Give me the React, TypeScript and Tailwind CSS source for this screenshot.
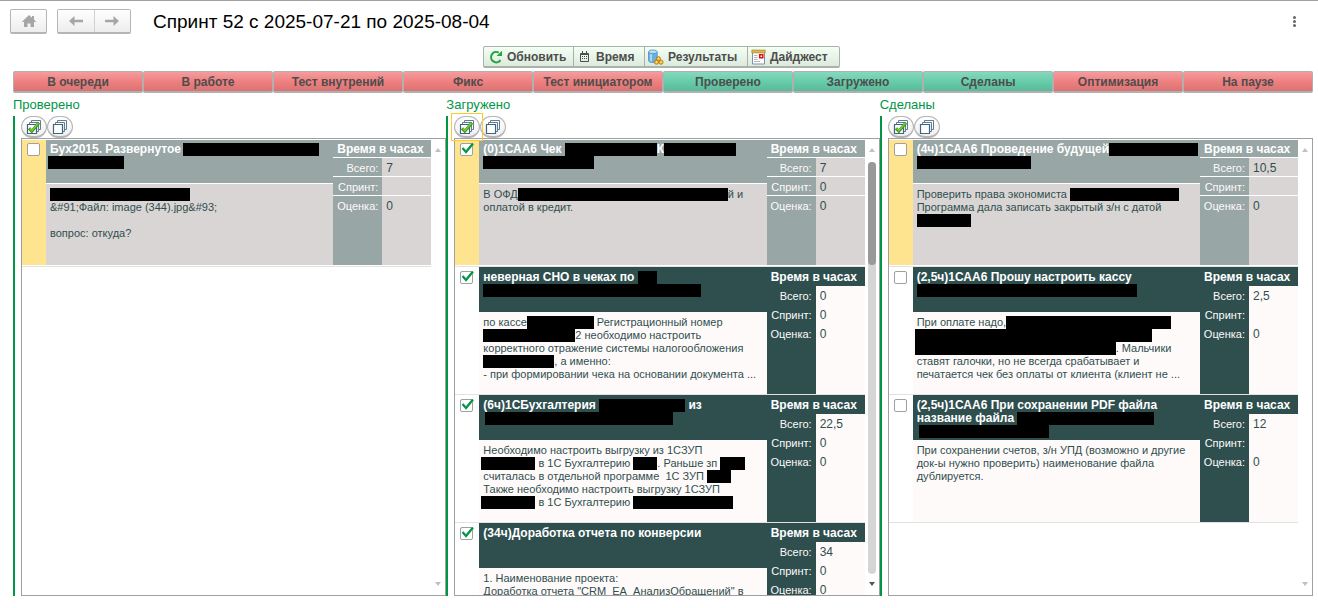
import React from "react";

type Tone = "selected" | "normal";

interface Task {
  id: string;
  tone: Tone;
  checked: boolean;
  label: string;
  title: React.ReactNode;
  body: React.ReactNode;
  total: string;
  sprint: string;
  estimate: string;
}

interface Column {
  name: string;
  focused?: boolean;
  scrollable?: boolean;
  tasks: Task[];
}

function Line({ children }: { children?: React.ReactNode }) {
  return <div className="h-[13px] whitespace-pre">{children}</div>;
}

function Bar({ size }: { size: string }) {
  return <span aria-hidden="true" className={`inline-block h-[13px] bg-black align-top ${size}`} />;
}

const columns: Column[] = [
  {
    name: "Проверено",
    tasks: [
      {
        id: "p1",
        tone: "selected",
        checked: false,
        label: "Бух2015. Развернутое",
        title: (
          <>
            <Line>Бух2015. Развернутое<Bar size="ml-0.5 w-[136px]" /></Line>
            <Line><Bar size="-ml-0.5 w-[76px]" /></Line>
          </>
        ),
        body: (
          <>
            <Line><Bar size="w-[140px]" /></Line>
            <Line>&amp;#91;Файл: image (344).jpg&amp;#93;</Line>
            <Line />
            <Line>вопрос: откуда?</Line>
          </>
        ),
        total: "7",
        sprint: "",
        estimate: "0",
      },
    ],
  },
  {
    name: "Загружено",
    focused: true,
    scrollable: true,
    tasks: [
      {
        id: "z1",
        tone: "selected",
        checked: true,
        label: "(0)1САА6 Чек",
        title: (
          <>
            <Line>(0)1САА6 Чек <Bar size="w-[92px]" />К<Bar size="w-[72px]" /></Line>
            <Line><Bar size="w-[111px]" /></Line>
          </>
        ),
        body: (
          <>
            <Line>В ОФД<Bar size="w-[210px]" />й и</Line>
            <Line>оплатой в кредит.</Line>
          </>
        ),
        total: "7",
        sprint: "0",
        estimate: "0",
      },
      {
        id: "z2",
        tone: "normal",
        checked: true,
        label: "неверная СНО в чеках по",
        title: (
          <>
            <Line>неверная СНО в чеках по <Bar size="w-[19px]" /></Line>
            <Line><Bar size="w-[218px]" /></Line>
          </>
        ),
        body: (
          <>
            <Line>по кассе<Bar size="w-[67px]" /> Регистрационный номер</Line>
            <Line><Bar size="w-[92px]" />2 необходимо настроить</Line>
            <Line>корректного отражение системы налогообложения</Line>
            <Line><Bar size="w-[71px]" />, а именно:</Line>
            <Line>- при формировании чека на основании документа ...</Line>
          </>
        ),
        total: "0",
        sprint: "0",
        estimate: "0",
      },
      {
        id: "z3",
        tone: "normal",
        checked: true,
        label: "(6ч)1СБухгалтерия",
        title: (
          <>
            <Line>(6ч)1СБухгалтерия <Bar size="w-[86px]" /> из</Line>
            <Line><Bar size="ml-0.5 w-[188px]" /></Line>
          </>
        ),
        body: (
          <>
            <Line>Необходимо настроить выгрузку из 1СЗУП</Line>
            <Line><Bar size="-ml-0.5 w-[54px]" /> в 1С Бухгалтерию <Bar size="w-[24px]" />. Раньше зп <Bar size="w-[25px]" /></Line>
            <Line>считалась в отдельной программе  1С ЗУП <Bar size="w-[24px]" /></Line>
            <Line>Также необходимо настроить выгрузку 1СЗУП</Line>
            <Line><Bar size="-ml-0.5 w-[54px]" /> в 1С Бухгалтерию <Bar size="w-[100px]" /></Line>
          </>
        ),
        total: "22,5",
        sprint: "0",
        estimate: "0",
      },
      {
        id: "z4",
        tone: "normal",
        checked: true,
        label: "(34ч)Доработка отчета по конверсии",
        title: <Line>(34ч)Доработка отчета по конверсии</Line>,
        body: (
          <>
            <Line>1. Наименование проекта:</Line>
            <Line>Доработка отчета "CRM_ЕА_АнализОбращений" в</Line>
          </>
        ),
        total: "34",
        sprint: "0",
        estimate: "0",
      },
    ],
  },
  {
    name: "Сделаны",
    tasks: [
      {
        id: "s1",
        tone: "selected",
        checked: false,
        label: "(4ч)1САА6 Проведение будущей",
        title: (
          <>
            <Line>(4ч)1САА6 Проведение будущей<Bar size="w-[89px]" /></Line>
            <Line><Bar size="w-[114px]" /></Line>
          </>
        ),
        body: (
          <>
            <Line>Проверить права экономиста <Bar size="w-[109px]" /></Line>
            <Line>Программа дала записать закрытый з/н с датой</Line>
            <Line><Bar size="w-[54px]" /></Line>
          </>
        ),
        total: "10,5",
        sprint: "",
        estimate: "0",
      },
      {
        id: "s2",
        tone: "normal",
        checked: false,
        label: "(2,5ч)1САА6 Прошу настроить кассу",
        title: (
          <>
            <Line>(2,5ч)1САА6 Прошу настроить кассу</Line>
            <Line><Bar size="w-[220px]" /></Line>
          </>
        ),
        body: (
          <>
            <Line>При оплате надо,<Bar size="w-[165px]" /></Line>
            <Line><Bar size="-ml-0.5 w-[237px]" /></Line>
            <Line><Bar size="-ml-0.5 w-[201px]" />. Мальчики</Line>
            <Line>ставят галочки, но не всегда срабатывает и</Line>
            <Line>печатается чек без оплаты от клиента (клиент не ...</Line>
          </>
        ),
        total: "2,5",
        sprint: "",
        estimate: "0",
      },
      {
        id: "s3",
        tone: "normal",
        checked: false,
        label: "(2,5ч)1САА6 При сохранении PDF файла",
        title: (
          <>
            <Line>(2,5ч)1САА6 При сохранении PDF файла</Line>
            <Line>название файла <Bar size="w-[137px]" /></Line>
            <Line><Bar size="ml-0.5 w-[130px]" /></Line>
          </>
        ),
        body: (
          <>
            <Line>При сохранении счетов, з/н УПД (возможно и другие</Line>
            <Line>док-ы нужно проверить) наименование файла</Line>
            <Line>дублируется.</Line>
          </>
        ),
        total: "12",
        sprint: "",
        estimate: "0",
      },
    ],
  },
];

const tabs: { name: string; active: boolean }[] = [
  { name: "В очереди", active: false },
  { name: "В работе", active: false },
  { name: "Тест внутрений", active: false },
  { name: "Фикс", active: false },
  { name: "Тест инициатором", active: false },
  { name: "Проверено", active: true },
  { name: "Загружено", active: true },
  { name: "Сделаны", active: true },
  { name: "Оптимизация", active: false },
  { name: "На паузе", active: false },
];

function HomeIcon() {
  return (
    <svg width="16" height="14" viewBox="0 0 16 14" fill="#a6a6a6" aria-hidden="true">
      <path d="M8 1 11 3.800V2h2v3.600L15.200 8H13v5H9.500V9.500h-3V13H3V8H.8Z" />
    </svg>
  );
}

function ArrowIcon({ right = false }: { right?: boolean }) {
  return (
    <svg width="16" height="12" viewBox="0 0 16 12" aria-hidden="true" className={right ? "rotate-180" : ""}>
      <path d="M1 6 6.500 1v3.700H15v2.600H6.500V11Z" fill="#a6a6a6" />
    </svg>
  );
}

function RefreshIcon() {
  return (
    <svg width="14" height="14" viewBox="0 0 14 14" fill="none" aria-hidden="true">
      <path d="M11.500 10.200A5.200 5.200 0 1 1 9.800 2.600" stroke="#27a343" strokeWidth="2.100" />
      <path d="M13 .8V6H7.600Z" fill="#27a343" />
    </svg>
  );
}

function CalendarIcon() {
  return (
    <svg width="11" height="11" viewBox="0 0 11 11" fill="none" aria-hidden="true">
      <path d="M1.500 2.500h8v8h-8Z" stroke="#4d4d4d" />
      <path d="M1.500 3.500h8M3.500 0v2M7.500 0v2" stroke="#4d4d4d" />
      <path d="M3 5.500h1M5 5.500h1M7 5.500h1M3 7.500h1M5 7.500h1M7 7.500h1" stroke="#4d4d4d" />
    </svg>
  );
}

function ResultsIcon() {
  return (
    <svg width="16" height="16" viewBox="0 0 16 16" aria-hidden="true">
      <path d="M.5 3v8.500c0 1.300 2 2 4.300 2s4.400-.7 4.400-2V3Z" fill="#6cb0e0" stroke="#3f86bd" strokeWidth=".7" />
      <path d="M2 4.500v7.500c.6.300 1.200.5 2 .6V5Z" fill="#a9d5f2" />
      <ellipse cx="4.850" cy="2.800" rx="4.350" ry="1.900" fill="#b9def5" stroke="#3f86bd" strokeWidth=".7" />
      <g fill="#f5b935" stroke="#a87312" strokeWidth=".8">
        <circle cx="10.500" cy="9.800" r="2.100" />
        <circle cx="8.500" cy="13.200" r="2.100" />
        <circle cx="13" cy="13.200" r="2.100" />
      </g>
      <g fill="#fff3b0">
        <circle cx="10.500" cy="9.600" r=".7" />
        <circle cx="8.500" cy="13" r=".7" />
        <circle cx="13" cy="13" r=".7" />
      </g>
    </svg>
  );
}

function DigestIcon() {
  return (
    <svg width="15" height="16" viewBox="0 0 15 16" fill="none" aria-hidden="true">
      <path d="M1.500 1.500h12v13.500h-12Z" fill="#fff" stroke="#8090ac" />
      <path d="M.8 1h13.400v3H.8Z" fill="#d9b44a" stroke="#a8842a" strokeWidth=".6" />
      <path d="M3 6.500h3.500M3 8.500h3.500M3 10.500h3.500M3 12.500h6" stroke="#a9b6c8" />
      <path d="M8.700 5.700h3.100v3.100H8.700Z" fill="#fff" stroke="#e01010" strokeWidth="1.500" />
    </svg>
  );
}

function StackIcon({ checked }: { checked: boolean }) {
  return (
    <svg width="16" height="16" viewBox="0 0 16 16" fill="none" aria-hidden="true">
      <path d="M5.500 3V1.500h9v9H13M3.500 5V3.500h9v9H11" stroke="#5d7d94" />
      <path d="M1.500 5.500h9v9h-9Z" fill="#fff" stroke="#42657f" strokeWidth="1.200" />
      {checked && (
        <path d="M3 9.200 5.800 12.200 13 3.800" stroke="#3d9417" strokeWidth="3" />
      )}
      {checked && <path d="M3.600 9.400 5.800 11.700 12.500 4" stroke="#7ed13c" strokeWidth="1.300" />}
    </svg>
  );
}

const navButton =
  "flex items-center justify-center bg-linear-to-b from-white to-[#ededed]";
const toolButton =
  "flex items-center border-r border-[#a8b0a8] last:border-r-0 hover:brightness-95";

function Header() {
  return (
    <header className="flex items-center px-[10px] pt-2">
      <button aria-label="Домой" className={`${navButton} h-[25px] w-[37px] rounded-[2px] border border-b-2 border-[#b5b5b5]`}>
        <HomeIcon />
      </button>
      <div className="ml-[10px] flex h-[25px] w-[74px] rounded-[2px] border border-b-2 border-[#b5b5b5]">
        <button aria-label="Назад" className={`${navButton} flex-1 border-r border-[#d0d0d0]`}>
          <ArrowIcon />
        </button>
        <button aria-label="Вперед" className={`${navButton} flex-1`}>
          <ArrowIcon right />
        </button>
      </div>
      <h1 className="ml-[22px] text-[19px] leading-6 text-black">Спринт 52 с 2025-07-21 по 2025-08-04</h1>
      <button aria-label="Ещё" className="ml-auto flex h-6 w-7 items-center justify-center">
        <svg width="3" height="11" viewBox="0 0 3 11" fill="#666" aria-hidden="true">
          <circle cx="1.500" cy="1.500" r="1.500" />
          <circle cx="1.500" cy="5.500" r="1.500" />
          <circle cx="1.500" cy="9.500" r="1.500" />
        </svg>
      </button>
    </header>
  );
}

function Toolbar() {
  return (
    <div className="mt-3 mr-2 ml-[13px] flex justify-center text-[12px] leading-4 font-bold text-[#4d4d4d]">
      <div className="flex h-[22px] rounded-[2px] border border-b-2 border-[#aab2aa] bg-linear-to-b from-[#f4fff4] to-[#dceadc]">
        <button className={`${toolButton} w-[90px] gap-1 pl-[5px]`}><RefreshIcon />Обновить</button>
        <button className={`${toolButton} w-[71px] gap-1.5 pl-[5px]`}><CalendarIcon />Время</button>
        <button className={`${toolButton} w-[103px] gap-1 pl-[3px]`}><ResultsIcon />Результаты</button>
        <button className={`${toolButton} w-[91px] gap-1 pl-[3px]`}><DigestIcon />Дайджест</button>
      </div>
    </div>
  );
}

function StatusTabs() {
  return (
    <nav className="mt-[3px] mr-[5px] ml-[13px] grid grid-cols-10">
      {tabs.map((tab) => (
        <button
          key={tab.name}
          aria-pressed={tab.active}
          className={`h-[22px] rounded-[2px] border border-b-2 border-[#b0b0b0] text-center text-[12px] leading-4 font-bold whitespace-nowrap text-[#4d4d4d] bg-linear-to-b ${
            tab.active ? "from-[#86d8bd] via-[#66cdaa] to-[#5cb899]" : "from-[#f49c9c] via-[#f08080] to-[#d87373]"
          }`}
        >
          {tab.name}
        </button>
      ))}
    </nav>
  );
}

function TimeTable({ task }: { task: Task }) {
  const selected = task.tone === "selected";
  const headLine = selected ? "border-y border-white pt-px leading-4" : "pt-px leading-[18px]";
  const line = selected ? "border-b border-white pt-0.5 leading-4" : "pt-px leading-[18px]";
  const dark = selected ? "bg-[#98a6a6]" : "bg-[#2f4f4f]";
  const light = selected ? "bg-[#d9d5d4]" : "bg-[#fffafa]";
  const rows = [
    { name: "Всего:", value: task.total },
    { name: "Спринт:", value: task.sprint },
    { name: "Оценка:", value: task.estimate },
  ];
  return (
    <table className="h-[127px] w-[98px] shrink-0 table-fixed border-separate border-spacing-0 text-[12px]">
      <thead>
        <tr className="h-[19px]">
          <th colSpan={2} className={`px-1 text-left align-top font-bold whitespace-nowrap text-white ${dark} ${headLine}`}>
            Время в часах
          </th>
        </tr>
      </thead>
      <tbody>
        {rows.map((row, i) => {
          const last = i === rows.length - 1;
          return (
            <tr key={row.name} className={last ? "h-[70px]" : "h-[19px]"}>
              <th scope="row" className={`pr-1 text-right align-top text-[11px] font-normal text-[#fffafa] ${dark} ${line}`}>
                {row.name}
              </th>
              <td className={`pl-1 align-top text-[#2f4f4f] ${light} ${line}`}>{row.value}</td>
            </tr>
          );
        })}
      </tbody>
    </table>
  );
}

function Card({ task }: { task: Task }) {
  const selected = task.tone === "selected";
  return (
    <li className="flex h-32 shrink-0 border-b border-[#e2e2e2]">
      <div className={`w-6 shrink-0 pl-[5px] ${selected ? "border-y border-white bg-[#ffe48f] pt-[3px]" : "bg-white pt-1"}`}>
        <label className="relative block size-[13px]">
          <input
            type="checkbox"
            defaultChecked={task.checked}
            aria-label={task.label}
            className="peer block size-[13px] appearance-none rounded-[2px] border border-[#a0a0a0] bg-white"
          />
          <svg
            viewBox="0 0 15 14"
            width="15"
            height="14"
            fill="none"
            aria-hidden="true"
            className="pointer-events-none absolute -top-px left-0 hidden peer-checked:block"
          >
            <path d="M2.500 6 6 10 13 1.500" stroke="#009646" strokeWidth="2.300" />
          </svg>
        </label>
      </div>
      <div className="flex min-w-0 flex-1 flex-col">
        <h3
          className={`h-[45px] shrink-0 overflow-hidden pl-1 text-[12px] leading-[13px] font-bold text-white ${
            selected ? "border-y border-white bg-[#98a6a6] pt-[3px]" : "bg-[#2f4f4f] pt-1"
          }`}
        >
          {task.title}
        </h3>
        <div
          className={`flex-1 overflow-hidden pt-1 pl-1 text-[11px] leading-[13px] text-[#2f4f4f] ${
            selected ? "border-b border-white bg-[#d9d5d4]" : "bg-[#fffafa]"
          }`}
        >
          {task.body}
        </div>
      </div>
      <TimeTable task={task} />
    </li>
  );
}

function ScrollRail({ active }: { active: boolean }) {
  return (
    <div className="flex w-[14px] shrink-0 flex-col items-center pt-[9px] pb-[9px]">
      <svg width="6" height="4" viewBox="0 0 6 4" fill="#c0c0c0" aria-hidden="true">
        <path d="M0 4 3 0l3 4Z" />
      </svg>
      <div className={`mt-[10px] mb-2 w-2 flex-1 rounded-full ${active ? "bg-[#d5d5d5]" : ""}`}>
        {active && <div className="h-1/4 w-2 rounded-full bg-[#999]" />}
      </div>
      <svg width="6" height="4" viewBox="0 0 6 4" fill={active ? "#555" : "#c0c0c0"} aria-hidden="true">
        <path d="M0 0 3 4l3-4Z" />
      </svg>
    </div>
  );
}

const roundButton =
  "flex h-[22px] w-[26px] items-center justify-center rounded-full border border-b-2 border-[#b5b5b5] bg-linear-to-b from-white to-[#f0f0f0]";

function BoardColumn({ column }: { column: Column }) {
  return (
    <section className="flex min-h-0 min-w-0 flex-col">
      <h2 className="h-[23px] shrink-0 text-[13px] leading-6 text-[#009646]">{column.name}</h2>
      <div className="flex min-h-0 flex-1 flex-col border-l-2 border-[#009646] pl-[6px]">
        <div className="flex shrink-0">
          <span className="relative z-10">
            <button aria-label="Выбрать все" className={roundButton}><StackIcon checked /></button>
            {column.focused && (
              <span className="pointer-events-none absolute -inset-[3px] border border-[#ffc926]" />
            )}
          </span>
          <button aria-label="Снять выбор" className={roundButton}><StackIcon checked={false} /></button>
        </div>
        <div className="flex min-h-0 flex-1 border border-[#a0a0a0]">
          <ul className="flex min-w-0 flex-1 flex-col overflow-y-auto [scrollbar-width:none]">
            {column.tasks.map((task) => (
              <Card key={task.id} task={task} />
            ))}
          </ul>
          <ScrollRail active={Boolean(column.scrollable)} />
        </div>
      </div>
    </section>
  );
}

export default function App() {
  return (
    <div className="flex h-screen flex-col overflow-hidden border-t border-[#a0a0a0] bg-white pb-3 font-['Liberation_Sans',Arial,sans-serif]">
      <Header />
      <Toolbar />
      <StatusTabs />
      <main className="mr-[5px] ml-[13px] grid min-h-0 flex-1 grid-cols-3 grid-rows-1">
        {columns.map((column) => (
          <BoardColumn key={column.name} column={column} />
        ))}
      </main>
    </div>
  );
}
